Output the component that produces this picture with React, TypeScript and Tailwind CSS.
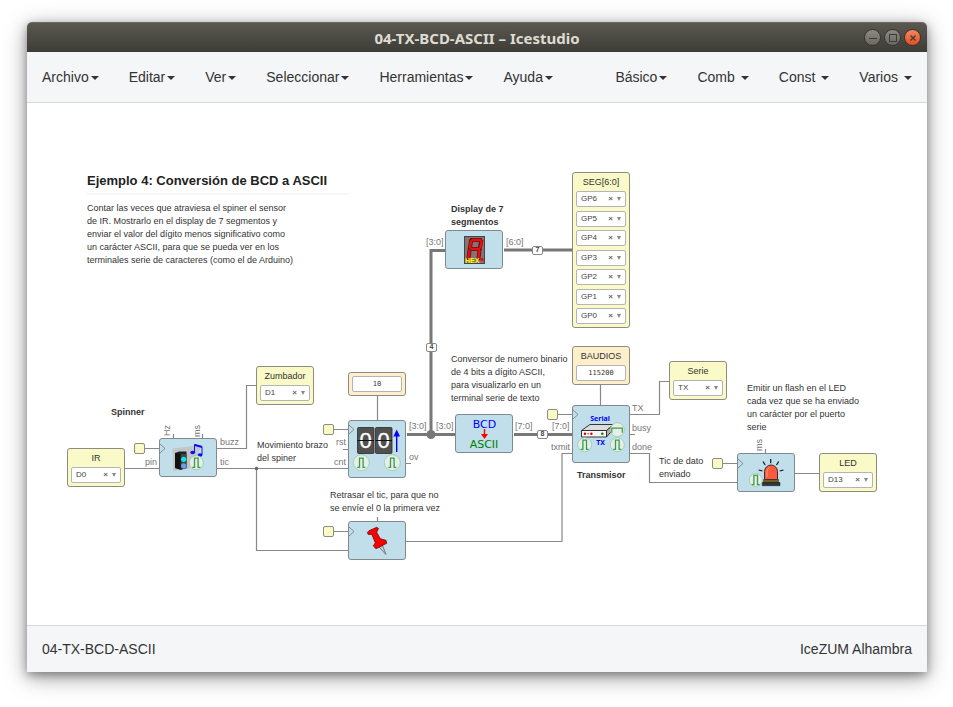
import { useState, type ReactNode } from "react";
import clsx from "clsx";

/* ---------- window chrome ---------- */

const LEFT_MENUS = ["Archivo", "Editar", "Ver", "Seleccionar", "Herramientas", "Ayuda"];
const RIGHT_MENUS = [
  { label: "Básico", spaced: false },
  { label: "Comb", spaced: true },
  { label: "Const", spaced: true },
  { label: "Varios", spaced: true },
];

function MenuButton({ label, spaced = false }: { label: string; spaced?: boolean }) {
  return (
    <button type="button" aria-haspopup="menu" className={clsx("flex h-full items-center px-[15px]", spaced ? "gap-[6px]" : "gap-[2px]")}>
      {label}
      <span className="mt-[2px] border-x-4 border-t-4 border-x-transparent border-t-[#333333]" />
    </button>
  );
}

function WindowButton({ label, close = false, children }: { label: string; close?: boolean; children: ReactNode }) {
  return (
    <button
      type="button"
      aria-label={label}
      className={clsx(
        "flex size-[17px] items-center justify-center rounded-full border border-[#35342f] bg-linear-to-b",
        close ? "from-[#f8845c] to-[#e2501c]" : "from-[#8c8a82] to-[#6a6861]",
      )}
    >
      <svg viewBox="0 0 16 16" className="size-4 shrink-0" fill="none" stroke="#3c3b37">
        {children}
      </svg>
    </button>
  );
}

function TitleBar() {
  return (
    <div className="grid h-[30px] grid-cols-[1fr_auto_1fr] items-center rounded-t-[5px] border-t border-[#6b6960] bg-linear-to-b from-[#5a5850] to-[#3d3c37] px-[6px]">
      <span />
      <h1 className="font-['Noto_Sans',sans-serif] text-[15px] leading-[20px] font-bold text-[#dfdbd2]">04-TX-BCD-ASCII – Icestudio</h1>
      <div className="flex justify-end gap-[3px]">
        <WindowButton label="Minimizar">
          <path d="M4 8.5h8" />
        </WindowButton>
        <WindowButton label="Maximizar">
          <rect x="4.5" y="4.5" width="7" height="7" />
        </WindowButton>
        <WindowButton label="Cerrar" close>
          <path d="M5.5 5.5l5 5M10.5 5.5l-5 5" strokeWidth="1.3" />
        </WindowButton>
      </div>
    </div>
  );
}

/* ---------- diagram parts ---------- */

function Note({ at, lines, bold = false }: { at: string; lines: string[]; bold?: boolean }) {
  return (
    <p className={clsx("absolute text-[9px] leading-[13px] whitespace-nowrap text-[#333333]", bold && "font-bold", at)}>
      {lines.map((line) => (
        <span key={line} className="block">
          {line}
        </span>
      ))}
    </p>
  );
}

function Port({ at, children }: { at: string; children: string }) {
  return <span className={clsx("absolute text-[9px] leading-[10px] whitespace-nowrap text-[#777777]", at)}>{children}</span>;
}

function PinSelect({ id, pin }: { id: string; pin: string }) {
  const [value, setValue] = useState(pin);
  return (
    <div className="flex h-4 w-full items-center rounded-[2px] border border-[#b4b4b4] bg-white pr-[4px] pl-[4px] text-[#444444]">
      <select
        id={id}
        value={value}
        aria-label={"Pin " + pin}
        onChange={(event) => setValue(event.target.value)}
        className="h-full min-w-0 flex-1 appearance-none bg-transparent text-[8px] leading-[14px]"
      >
        <option value={pin}>{pin}</option>
        <option value=""></option>
      </select>
      <button type="button" aria-label="Quitar pin" onClick={() => setValue("")} className="px-[4px] text-[8px] leading-[14px] font-bold text-[#666666]">
        ×
      </button>
      <span className="border-x-2 border-t-4 border-x-transparent border-t-[#888888]" />
    </div>
  );
}

function IoBlock({ at, title, pins }: { at: string; title: string; pins: string[] }) {
  const id = "pin-" + title.toLowerCase();
  return (
    <div className={clsx("absolute flex w-[58px] flex-col gap-[2px] rounded-[3px] border border-[#8c8c80] bg-[#fafac8] px-[3px] pb-[3px]", at)}>
      <label htmlFor={id} className="pt-[3px] text-center text-[9px] leading-[13px] text-[#333333]">
        {title}
      </label>
      <div className="flex flex-1 flex-col justify-between">
        {pins.map((pin, index) => (
          <PinSelect key={pin} id={index === 0 ? id : id + index} pin={pin} />
        ))}
      </div>
    </div>
  );
}

function ConstantBlock({ at, title, value }: { at: string; title?: string; value: string }) {
  const id = "const-" + value;
  return (
    <div className={clsx("absolute flex w-[58px] flex-col justify-end gap-[2px] rounded-[3px] border border-[#8c8c80] bg-[#fdefcc] p-[3px]", at)}>
      {title && (
        <label htmlFor={id} className="text-center text-[9px] leading-[13px] text-[#333333]">
          {title}
        </label>
      )}
      <input
        id={id}
        aria-label={title ?? "Constante"}
        defaultValue={value}
        className="h-4 w-full rounded-[2px] border border-[#b4b4b4] bg-white text-center font-['DejaVu_Sans_Mono',monospace] text-[7px] text-[#333333]"
      />
    </div>
  );
}

function Block({ at, label, clock, tall = false, children }: { at: string; label: string; clock?: number; tall?: boolean; children: ReactNode }) {
  return (
    <div className={clsx("absolute w-[58px] rounded-[3px] border border-[#808a8e] bg-[#c0dfeb]", tall ? "h-[58px]" : "h-[39px]", at)}>
      <svg viewBox={tall ? "1 1 56 56" : "1 1 56 37"} className="size-full" role="img" aria-label={label}>
        {clock !== undefined && <path d={`M1 ${clock - 4.5}l5 4.5l-5 4.5`} fill="none" stroke="#777" strokeWidth="0.8" />}
        {children}
      </svg>
    </div>
  );
}

function ClockTag({ at }: { at: string }) {
  return <div className={clsx("absolute size-[11px] rounded-[2px] border border-[#8c8c80] bg-[#fafac8]", at)} />;
}

function BusSize({ at, bits }: { at: string; bits: number }) {
  return (
    <span className={clsx("absolute flex h-[9px] w-[11px] items-center justify-center rounded-[2px] border border-[#888888] bg-white text-[7px] font-bold text-[#444444]", at)}>
      {bits}
    </span>
  );
}

function Pulse({ x, y, r = 7, wide = false }: { x: number; y: number; r?: number; wide?: boolean }) {
  return (
    <g transform={`translate(${x} ${y})`}>
      <circle r={r} fill="#e6eeea" stroke="#8cc79a" strokeWidth="0.7" />
      {wide ? (
        <path d="M-5.5 3v-4.500h10.500v4.500" fill="none" stroke="#3d9a47" strokeWidth="1.2" />
      ) : (
        <path d="M-4 4.600h2.200v-9.200h3.600v9.200h2.200" fill="none" stroke="#3d9a47" strokeWidth="1.300" />
      )}
    </g>
  );
}

function Wires() {
  return (
    <svg className="absolute inset-0 size-full" aria-hidden="true" fill="none">
      <g stroke="#888888" strokeWidth="1.2">
        <path d="M118 345.5h14M98 365.5h34M190 345.5h29.5v-63h9.500M190 365.5h131M229.500 365.5v82h91.500" />
        <path d="M146.500 331v5M175.500 331v5" />
        <path d="M350.500 293v24M307 326.500h14M316 346.500h5M379 360.500h5" />
        <path d="M573.500 282v20M530 311.500h15M603 311.500h29.500v-33h9.500M603 331.500h5M603 350.500h19.500v29h87.500" />
        <path d="M545 350.500h-10v88h-156M350.500 414v5M307 428.500h14" />
        <path d="M695 360.500h15M738.500 346v4M768 370.500h24" />
      </g>
      <g stroke="#777777" strokeWidth="3">
        <path d="M380 331.500h48M404 331.500v-184h14M477 147h68M487 331.500h58" />
      </g>
      <circle cx="229.500" cy="365.500" r="1.800" fill="#666666" />
      <circle cx="404" cy="331.500" r="4.500" fill="#777777" />
    </svg>
  );
}

/* ---------- block drawings ---------- */

function SevenSegment() {
  return (
    <>
      <rect x="19.500" y="6.500" width="20" height="27" fill="#857474" stroke="#4a4343" />
      <g stroke="#5a1515" strokeWidth="4" strokeLinecap="square">
        <path d="M27 10h8M26 19h8M26 11.500l-1 6M36 11.500l-1 6M24.500 21l-1 7M34.500 21l-1 7" />
      </g>
      <g stroke="#ee0c0c" strokeWidth="2.400" strokeLinecap="round">
        <path d="M27.500 10h8M26.500 19h7.500M26 11.500l-1 6M36.500 11.500l-1 6M24.500 21l-1.200 7M34.500 21l-1.200 7" />
      </g>
      <circle cx="37" cy="29.500" r="1.700" fill="#e01010" />
      <text x="20" y="33" fontSize="7" fontWeight="bold" fill="#ffff00">
        HEX
      </text>
    </>
  );
}

function SpinnerDrawing() {
  return (
    <>
      <path d="M13.500 10.500L34 8l8 1.500L30 31l-16 2z" fill="#c2c5c9" />
      <path d="M16 15l4-1.500h7.500v16L22 32l-6-2z" fill="#222222" />
      <path d="M21.500 16h6v14.500h-6z" fill="#444444" />
      <path d="M16 15l5.500 1v15.500L16 30z" fill="#111111" />
      <circle cx="24.700" cy="21.300" r="2.600" fill="#11e4e4" />
      <circle cx="24.700" cy="27.800" r="2.600" fill="#6a9cf4" />
      <path d="M35.500 14.500V6.500l7.500 2v8.500" fill="none" stroke="#1010ee" strokeWidth="1" />
      <path d="M35.500 6l7.500 2v2l-7.500-2z" fill="#1010ee" />
      <ellipse cx="33.700" cy="14.500" rx="2.400" ry="1.800" fill="#1010ee" />
      <ellipse cx="41" cy="17" rx="2.400" ry="1.800" fill="#1010ee" />
      <Pulse x={37.300} y={24.700} />
    </>
  );
}

function CounterDrawing() {
  return (
    <>
      {[9.500, 27.500].map((x) => (
        <g key={x}>
          <rect x={x} y="7.500" width="16.500" height="26" rx="1" fill="#505050" stroke="#2b2b2b" strokeWidth="0.800" />
          <text x={x + 8.200} y="28" textAnchor="middle" fontSize="22" fill="#ffffff" stroke="#ffffff" strokeWidth="0.300">
            0
          </text>
          <path d={`M${x} 20.500h16.500`} stroke="#111111" strokeWidth="1" />
        </g>
      ))}
      <path d="M48.700 32V15" stroke="#0000ff" strokeWidth="1.400" />
      <path d="M48.700 9.500l3.300 7h-6.600z" fill="#0000ff" />
      <Pulse x={13.300} y={42.700} r={8} />
      <Pulse x={44.300} y={42.700} r={8} />
    </>
  );
}

function BcdDrawing() {
  return (
    <g className="font-['DejaVu_Sans',sans-serif]" textAnchor="middle">
      <text x="29.500" y="14" fontSize="11" fill="#0000ff">
        BCD
      </text>
      <path d="M29.500 15v6" stroke="#ff0000" strokeWidth="1.400" />
      <path d="M26 20h7l-3.500 5z" fill="#ff0000" />
      <text x="29" y="34" fontSize="11" fill="#008000">
        ASCII
      </text>
    </g>
  );
}

function SerialDrawing() {
  return (
    <>
      <g stroke="#222222" strokeWidth="0.900" strokeLinejoin="round">
        <path d="M9.500 25.500l8.500-6h24l-7.500 6z" fill="#dddddd" />
        <path d="M34.500 25.500l7.500-6v4l-7.500 8.500z" fill="#b0b0b0" />
        <path d="M9.500 25.500h25v6.500h-25z" fill="#f6f6f6" />
      </g>
      <Pulse x={45.300} y={24.700} wide />
      <circle cx="13" cy="28.700" r="1.200" fill="#d40000" />
      <circle cx="16.200" cy="28.700" r="0.900" fill="#d46a6a" />
      <circle cx="19.400" cy="28.700" r="1.200" fill="#d40000" />
      <circle cx="30.300" cy="28.700" r="1.300" fill="#157a15" />
      <g className="font-['Noto_Sans',sans-serif]" fontSize="7" fontWeight="bold" fill="#0000ff" textAnchor="middle">
        <text x="28" y="16">Serial</text>
        <text x="28.500" y="40">TX</text>
      </g>
      <Pulse x={12.700} y={39.700} />
      <Pulse x={45.300} y={39.700} />
    </>
  );
}

function PushPin() {
  return (
    <>
      <path d="M31 26l3.500-1.700L38 33.500z" fill="#c8c8c8" stroke="#555555" strokeWidth="0.700" />
      <path
        d="M19.300 11.700L21 9.700L28.700 6.300L30.500 7.500L28.700 11.300L32.300 17.700L38 19.300L38.700 22.300L28 27.700L25.300 25L27.300 21.700L23.700 13.300L20.300 13.500z"
        fill="#fa0000"
        stroke="#5a0000"
        strokeWidth="0.700"
        strokeLinejoin="round"
      />
    </>
  );
}

function Siren() {
  return (
    <>
      <Pulse x={18.700} y={27} r={6.500} />
      <path d="M27.500 26.500V18.500a6.500 6.500 0 0 1 13 0v8z" fill="#fb5a3c" stroke="#222222" strokeWidth="0.900" />
      <path d="M30 24v-5.500q0-3 2.500-4" fill="none" stroke="#ff9a80" strokeWidth="1" />
      <path d="M26.500 26.500h15v3h-15z" fill="#6e6220" stroke="#222222" strokeWidth="0.500" />
      <path d="M25.300 29.500h17.700v3.200h-17.700z" fill="#333340" stroke="#111111" strokeWidth="0.500" />
      <path d="M33.700 6v4.300M26 8.500l2.200 3.500M41.700 8.500l-2.200 3.500M21.700 17l3.800 1M46.500 17l-3.800 1" stroke="#111111" strokeWidth="1.200" />
    </>
  );
}

/* ---------- canvas ---------- */

function Diagram() {
  return (
    <main className="relative min-h-[480px] flex-1 overflow-hidden bg-white">
      <Wires />

      <section className="absolute top-[69px] left-[60px] w-[262px] text-[#333333]">
        <h2 className="border-b-2 border-[#f6f6f6] pb-[3px] text-[13px] leading-[18px] font-bold text-[#222222]">Ejemplo 4: Conversión de BCD a ASCII</h2>
      </section>
      <Note
        at="left-[60px] top-[99px]"
        lines={[
          "Contar las veces que atraviesa el spiner el sensor",
          "de IR. Mostrarlo en el display de 7 segmentos y",
          "enviar el valor del dígito menos significativo como",
          "un carácter ASCII, para que se pueda ver en los",
          "terminales serie de caracteres (como el de Arduino)",
        ]}
      />
      <Note at="left-[424px] top-[100px]" bold lines={["Display de 7", "segmentos"]} />
      <Note at="left-[84px] top-[303px]" bold lines={["Spinner"]} />
      <Note at="left-[230px] top-[336px]" lines={["Movimiento brazo", "del spiner"]} />
      <Note at="left-[303px] top-[386px]" lines={["Retrasar el tic, para que no", "se envíe el 0 la primera vez"]} />
      <Note at="left-[424px] top-[250px]" lines={["Conversor de numero binario", "de 4 bits a dígito ASCII,", "para visualizarlo en un", "terminal serie de texto"]} />
      <Note at="left-[550px] top-[366px]" bold lines={["Transmisor"]} />
      <Note at="left-[632px] top-[352px]" lines={["Tic de dato", "enviado"]} />
      <Note at="left-[720px] top-[279px]" lines={["Emitir un flash en el LED", "cada vez que se ha enviado", "un carácter por el puerto", "serie"]} />

      <IoBlock at="left-[40px] top-[345px] h-[39px]" title="IR" pins={["D0"]} />
      <IoBlock at="left-[229px] top-[263px] h-[39px]" title="Zumbador" pins={["D1"]} />
      <IoBlock at="left-[545px] top-[69px] h-[156px]" title="SEG[6:0]" pins={["GP6", "GP5", "GP4", "GP3", "GP2", "GP1", "GP0"]} />
      <IoBlock at="left-[642px] top-[258px] h-[39px]" title="Serie" pins={["TX"]} />
      <IoBlock at="left-[792px] top-[350px] h-[39px]" title="LED" pins={["D13"]} />

      <ConstantBlock at="left-[321px] top-[269px] h-[24px]" value="10" />
      <ConstantBlock at="left-[545px] top-[243px] h-[39px]" title="BAUDIOS" value="115200" />

      <ClockTag at="left-[107px] top-[340px]" />
      <ClockTag at="left-[296px] top-[321px]" />
      <ClockTag at="left-[520px] top-[306px]" />
      <ClockTag at="left-[296px] top-[423px]" />
      <ClockTag at="left-[685px] top-[355px]" />

      <Block at="left-[418px] top-[127px]" label="Display de 7 segmentos">
        <SevenSegment />
      </Block>
      <Block at="left-[132px] top-[335px]" label="Spinner" clock={10.500}>
        <SpinnerDrawing />
      </Block>
      <Block at="left-[321px] top-[317px]" label="Contador" clock={9.500} tall>
        <CounterDrawing />
      </Block>
      <Block at="left-[428px] top-[311px]" label="BCD a ASCII">
        <BcdDrawing />
      </Block>
      <Block at="left-[545px] top-[302px]" label="Transmisor serie" clock={9.500} tall>
        <SerialDrawing />
      </Block>
      <Block at="left-[321px] top-[418px]" label="Retardo" clock={10.500}>
        <PushPin />
      </Block>
      <Block at="left-[710px] top-[350px]" label="Flash" clock={10.500}>
        <Siren />
      </Block>

      <Port at="left-[399px] top-[134px]">[3:0]</Port>
      <Port at="left-[479px] top-[134px]">[6:0]</Port>
      <Port at="left-[135px] top-[322px] w-[10px] [writing-mode:vertical-rl] rotate-180">Hz</Port>
      <Port at="left-[165px] top-[322px] w-[10px] [writing-mode:vertical-rl] rotate-180">ms</Port>
      <Port at="left-[118px] top-[354px]">pin</Port>
      <Port at="left-[193px] top-[334px]">buzz</Port>
      <Port at="left-[193px] top-[354px]">tic</Port>
      <Port at="left-[309px] top-[334px]">rst</Port>
      <Port at="left-[307px] top-[354px]">cnt</Port>
      <Port at="left-[382px] top-[349px]">ov</Port>
      <Port at="left-[382px] top-[318px]">[3:0]</Port>
      <Port at="left-[409px] top-[318px]">[3:0]</Port>
      <Port at="left-[488px] top-[318px]">[7:0]</Port>
      <Port at="left-[525px] top-[318px]">[7:0]</Port>
      <Port at="left-[524px] top-[339px]">txmit</Port>
      <Port at="left-[605px] top-[300px]">TX</Port>
      <Port at="left-[605px] top-[320px]">busy</Port>
      <Port at="left-[605px] top-[339px]">done</Port>
      <Port at="left-[727px] top-[336px] w-[10px] [writing-mode:vertical-rl] rotate-180">ms</Port>

      <BusSize at="left-[505px] top-[143px]" bits={7} />
      <BusSize at="left-[399px] top-[240px]" bits={4} />
      <BusSize at="left-[510px] top-[327px]" bits={8} />
    </main>
  );
}

export default function App() {
  return (
    <div className="flex min-h-screen flex-col bg-white pt-[22px] pr-[26px] pb-[35px] pl-[27px] font-['Liberation_Sans',Arial,sans-serif]">
      <div className="flex flex-1 flex-col rounded-t-[5px] shadow-[0_3px_8px_rgba(0,0,0,0.3),0_5px_22px_rgba(0,0,0,0.4)]">
        <TitleBar />
        <nav className="flex h-[51px] justify-between border-b border-[#d3dadf] bg-[#f5f6f8] text-[14px] text-[#333333]">
          <div className="flex">
            {LEFT_MENUS.map((label) => (
              <MenuButton key={label} label={label} />
            ))}
          </div>
          <div className="flex">
            {RIGHT_MENUS.map((menu) => (
              <MenuButton key={menu.label} label={menu.label} spaced={menu.spaced} />
            ))}
          </div>
        </nav>
        <Diagram />
        <footer className="flex h-[47px] items-center justify-between border-t border-[#d3dadf] bg-[#f5f6f8] px-[15px] text-[14px] text-[#333333]">
          <span>04-TX-BCD-ASCII</span>
          <span>IceZUM Alhambra</span>
        </footer>
      </div>
    </div>
  );
}
